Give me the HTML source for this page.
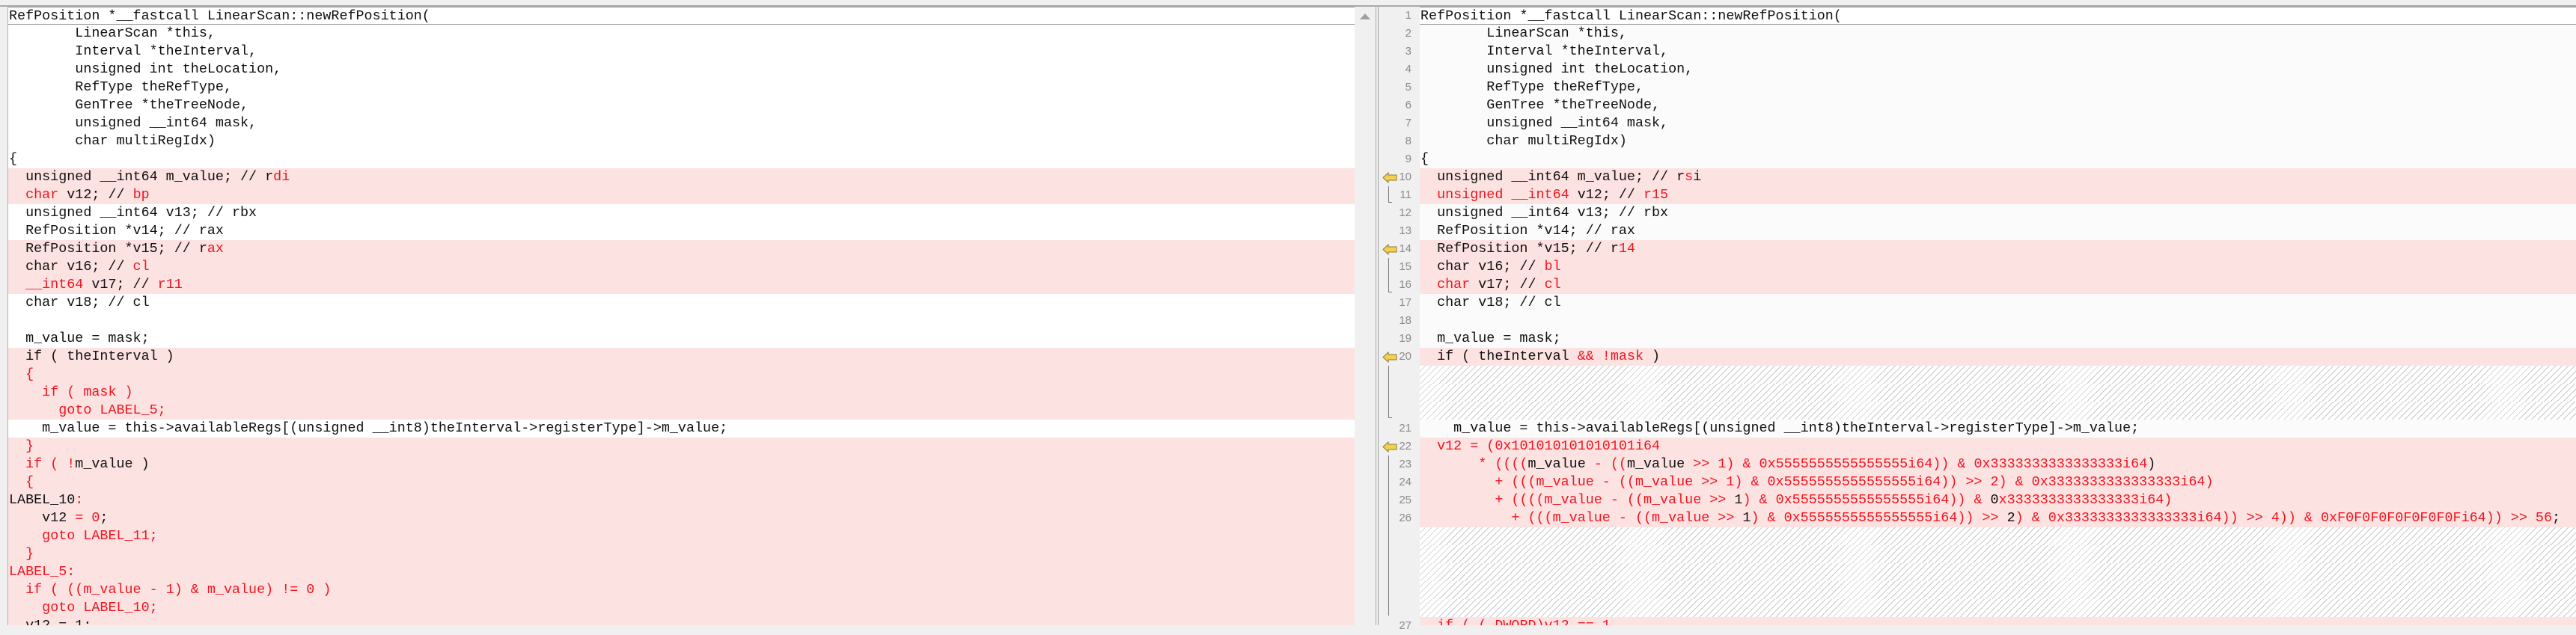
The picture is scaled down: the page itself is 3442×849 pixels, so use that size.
<!DOCTYPE html>
<html><head><meta charset="utf-8"><style>
*{margin:0;padding:0;box-sizing:border-box}
body{width:3442px;height:836px;overflow:hidden;background:#f0f0f0;position:relative;font-family:"Liberation Mono",monospace;font-size:18.4px;color:#111}
.pane{position:absolute;top:9px;height:827px;overflow:hidden}
#L{left:10px;width:1800px;background:#fff;border-left:1px solid #b0b0b0}
#R{left:1897px;width:1545px;background:#fbfbfb}
.r{height:24px;line-height:24px;white-space:pre;padding-left:1px}
.d{background:#fde2e2}
.h{background:repeating-linear-gradient(135deg,#fff 0,#fff 5px,#c8c8c8 5px,#c8c8c8 6px)}
.cur{border-top:1px solid #999;border-bottom:1px solid #999}
i{font-style:normal;color:#f0141e}
#top{position:absolute;left:0;top:0;width:3442px;height:9px;background:#f0f0f0;border-bottom:2px solid #a8a8a8}
#gut{position:absolute;left:1841px;top:9px;width:56px;height:827px;background:#f0f0f0;border-left:1px solid #a0a0a0}
.vl{position:absolute;left:1838px;top:9px;width:1px;height:827px;background:#a8a8a8}
.n{position:absolute;right:11px;width:40px;text-align:right;font-family:"Liberation Sans",sans-serif;font-size:15px;color:#8a8a8a;line-height:24px;height:24px}
.ar{position:absolute;left:5px}
.br{position:absolute;left:13px;width:5px;border-left:1px solid #777;border-bottom:1px solid #777}
</style></head><body>
<div id="top"></div>
<div id="L" class="pane">
<div class="r cur">RefPosition *__fastcall LinearScan::newRefPosition(</div>
<div class="r">        LinearScan *this,</div>
<div class="r">        Interval *theInterval,</div>
<div class="r">        unsigned int theLocation,</div>
<div class="r">        RefType theRefType,</div>
<div class="r">        GenTree *theTreeNode,</div>
<div class="r">        unsigned __int64 mask,</div>
<div class="r">        char multiRegIdx)</div>
<div class="r">{</div>
<div class="r d">  unsigned __int64 m_value; // r<i>di</i></div>
<div class="r d">  <i>char</i> v12; // <i>bp</i></div>
<div class="r">  unsigned __int64 v13; // rbx</div>
<div class="r">  RefPosition *v14; // rax</div>
<div class="r d">  RefPosition *v15; // r<i>ax</i></div>
<div class="r d">  char v16; // <i>cl</i></div>
<div class="r d">  <i>__int64</i> v17; // <i>r11</i></div>
<div class="r">  char v18; // cl</div>
<div class="r"> </div>
<div class="r">  m_value = mask;</div>
<div class="r d">  if ( theInterval )</div>
<div class="r d">  <i>{</i></div>
<div class="r d">    <i>if ( mask )</i></div>
<div class="r d">      <i>goto LABEL_5;</i></div>
<div class="r">    m_value = this-&gt;availableRegs[(unsigned __int8)theInterval-&gt;registerType]-&gt;m_value;</div>
<div class="r d">  <i>}</i></div>
<div class="r d">  <i>if ( !</i>m_value )</div>
<div class="r d">  <i>{</i></div>
<div class="r d">LABEL_10<i>:</i></div>
<div class="r d">    v12 <i>= 0</i>;</div>
<div class="r d">    <i>goto LABEL_11;</i></div>
<div class="r d">  <i>}</i></div>
<div class="r d"><i>LABEL_5:</i></div>
<div class="r d">  <i>if ( ((m_value - 1) &amp; m_value) != 0 )</i></div>
<div class="r d">    <i>goto LABEL_10;</i></div>
<div class="r d">  v12 = 1;</div>
</div>
<svg style="position:absolute;left:1815px;top:16px" width="18" height="12"><polygon points="9,2 16,10 2,10" fill="#a0a0a0"/></svg>
<div class="vl"></div>
<div id="gut">
<div class="n" style="top:0">1</div><div class="n" style="top:24px">2</div><div class="n" style="top:48px">3</div><div class="n" style="top:72px">4</div><div class="n" style="top:96px">5</div><div class="n" style="top:120px">6</div><div class="n" style="top:144px">7</div><div class="n" style="top:168px">8</div><div class="n" style="top:192px">9</div><div class="n" style="top:216px">10</div><div class="n" style="top:240px">11</div><div class="n" style="top:264px">12</div><div class="n" style="top:288px">13</div><div class="n" style="top:312px">14</div><div class="n" style="top:336px">15</div><div class="n" style="top:360px">16</div><div class="n" style="top:384px">17</div><div class="n" style="top:408px">18</div><div class="n" style="top:432px">19</div><div class="n" style="top:456px">20</div><div class="n" style="top:552px">21</div><div class="n" style="top:576px">22</div><div class="n" style="top:600px">23</div><div class="n" style="top:624px">24</div><div class="n" style="top:648px">25</div><div class="n" style="top:672px">26</div><div class="n" style="top:816px">27</div>
<svg class="ar" style="top:221px" width="20" height="15"><path d="M1,7.5 L8,1 L8,4 L19,4 L19,11 L8,11 L8,14 Z" fill="#f5d04a" stroke="#8a7a3a" stroke-width="1"/></svg>
<svg class="ar" style="top:317px" width="20" height="15"><path d="M1,7.5 L8,1 L8,4 L19,4 L19,11 L8,11 L8,14 Z" fill="#f5d04a" stroke="#8a7a3a" stroke-width="1"/></svg>
<svg class="ar" style="top:461px" width="20" height="15"><path d="M1,7.5 L8,1 L8,4 L19,4 L19,11 L8,11 L8,14 Z" fill="#f5d04a" stroke="#8a7a3a" stroke-width="1"/></svg>
<svg class="ar" style="top:581px" width="20" height="15"><path d="M1,7.5 L8,1 L8,4 L19,4 L19,11 L8,11 L8,14 Z" fill="#f5d04a" stroke="#8a7a3a" stroke-width="1"/></svg>
<div class="br" style="top:240px;height:22px"></div>
<div class="br" style="top:336px;height:46px"></div>
<div class="br" style="top:480px;height:70px"></div>
<div class="br" style="top:600px;height:214px;border-bottom:none"></div>
</div>
<div id="R" class="pane">
<div class="r cur" style="background:#fff">RefPosition *__fastcall LinearScan::newRefPosition(</div>
<div class="r">        LinearScan *this,</div>
<div class="r">        Interval *theInterval,</div>
<div class="r">        unsigned int theLocation,</div>
<div class="r">        RefType theRefType,</div>
<div class="r">        GenTree *theTreeNode,</div>
<div class="r">        unsigned __int64 mask,</div>
<div class="r">        char multiRegIdx)</div>
<div class="r">{</div>
<div class="r d">  unsigned __int64 m_value; // r<i>s</i>i</div>
<div class="r d">  <i>unsigned __int64</i> v12; // <i>r15</i></div>
<div class="r">  unsigned __int64 v13; // rbx</div>
<div class="r">  RefPosition *v14; // rax</div>
<div class="r d">  RefPosition *v15; // r<i>14</i></div>
<div class="r d">  char v16; // <i>bl</i></div>
<div class="r d">  <i>char</i> v17; // <i>cl</i></div>
<div class="r">  char v18; // cl</div>
<div class="r"> </div>
<div class="r">  m_value = mask;</div>
<div class="r d">  if ( theInterval <i>&amp;&amp; !mask</i> )</div>
<div class="r h"> </div><div class="r h"> </div><div class="r h"> </div>
<div class="r">    m_value = this-&gt;availableRegs[(unsigned __int8)theInterval-&gt;registerType]-&gt;m_value;</div>
<div class="r d">  <i>v12 = (0x101010101010101i64</i></div>
<div class="r d">       <i>* ((((</i>m_value<i> - ((</i>m_value<i> &gt;&gt; 1) &amp; 0x5555555555555555i64)) &amp; 0x3333333333333333i64</i>)</div>
<div class="r d">         <i>+ (((m_value - ((m_value &gt;&gt; 1) &amp; 0x5555555555555555i64)) &gt;&gt; 2) &amp; 0x3333333333333333i64)</i></div>
<div class="r d">         <i>+ ((((m_value - ((m_value &gt;&gt; </i>1<i>) &amp; 0x5555555555555555i64)) &amp; </i>0<i>x3333333333333333i64)</i></div>
<div class="r d">           <i>+ (((m_value - ((m_value &gt;&gt; </i>1<i>) &amp; 0x5555555555555555i64)) &gt;&gt; </i>2<i>) &amp; 0x3333333333333333i64)) &gt;&gt; 4)) &amp; 0xF0F0F0F0F0F0F0Fi64)) &gt;&gt; 56</i>;</div>
<div class="r h"> </div><div class="r h"> </div><div class="r h"> </div><div class="r h"> </div><div class="r h"> </div>
<div class="r d">  <i>if ( (_DWORD)v12 == 1</i></div>
</div>
</body></html>
